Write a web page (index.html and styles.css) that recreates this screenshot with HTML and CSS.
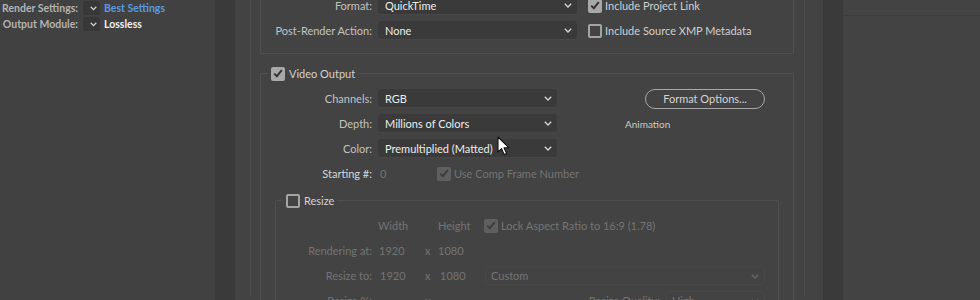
FILE: index.html
```html
<!DOCTYPE html>
<html lang="en">
<head>
    <meta charset="UTF-8">
    <meta name="viewport" content="width=device-width, initial-scale=1.0">
    <title>Output Module Settings</title>
    <link rel="stylesheet" href="styles.css">
</head>
<body>
    <div class="app">
        <aside class="queue">
            <div class="queue-row">
                <span class="queue-label">Render Settings:</span>
                <span class="mini-select"><svg width="7" height="5" viewBox="0 0 7 5"><path d="M0.7 0.8 L3.5 3.6 L6.3 0.8" fill="none" stroke="#cfcfcf" stroke-width="1.3"/></svg></span>
                <span class="queue-value link">Best Settings</span>
            </div>
            <div class="queue-row">
                <span class="queue-label">Output Module:</span>
                <span class="mini-select"><svg width="7" height="5" viewBox="0 0 7 5"><path d="M0.7 0.8 L3.5 3.6 L6.3 0.8" fill="none" stroke="#cfcfcf" stroke-width="1.3"/></svg></span>
                <span class="queue-value">Lossless</span>
            </div>
        </aside>

        <div class="gutter"></div>

        <main class="dialog">
            <div class="panel">
                <div class="group group-output">
                    <div class="row">
                        <span class="label">Format:</span>
                        <div class="select select-wide">QuickTime<svg class="chev" width="8" height="5" viewBox="0 0 8 5"><path d="M0.8 0.8 L4 4 L7.2 0.8" fill="none" stroke="#d6d6d6" stroke-width="1.3"/></svg></div>
                        <span class="check"><span class="box checked"><svg width="10" height="9" viewBox="0 0 10 9"><path d="M1.2 4.6 L3.8 7.2 L8.8 1.2" fill="none" stroke="#333" stroke-width="2"/></svg></span>Include Project Link</span>
                    </div>
                    <div class="row">
                        <span class="label">Post-Render Action:</span>
                        <div class="select select-wide">None<svg class="chev" width="8" height="5" viewBox="0 0 8 5"><path d="M0.8 0.8 L4 4 L7.2 0.8" fill="none" stroke="#d6d6d6" stroke-width="1.3"/></svg></div>
                        <span class="check"><span class="box"></span>Include Source XMP Metadata</span>
                    </div>
                </div>

                <fieldset class="group group-video">
                    <legend class="legend"><span class="box checked"><svg width="10" height="9" viewBox="0 0 10 9"><path d="M1.2 4.6 L3.8 7.2 L8.8 1.2" fill="none" stroke="#333" stroke-width="2"/></svg></span>Video Output</legend>

                    <div class="rows">
                        <div class="row">
                            <span class="label">Channels:</span>
                            <div class="select">RGB<svg class="chev" width="8" height="5" viewBox="0 0 8 5"><path d="M0.8 0.8 L4 4 L7.2 0.8" fill="none" stroke="#d6d6d6" stroke-width="1.3"/></svg></div>
                            <button class="pill">Format Options...</button>
                        </div>
                        <div class="row">
                            <span class="label">Depth:</span>
                            <div class="select">Millions of Colors<svg class="chev" width="8" height="5" viewBox="0 0 8 5"><path d="M0.8 0.8 L4 4 L7.2 0.8" fill="none" stroke="#d6d6d6" stroke-width="1.3"/></svg></div>
                            <span class="codec">Animation</span>
                        </div>
                        <div class="row">
                            <span class="label">Color:</span>
                            <div class="select">Premultiplied (Matted)<svg class="chev" width="8" height="5" viewBox="0 0 8 5"><path d="M0.8 0.8 L4 4 L7.2 0.8" fill="none" stroke="#d6d6d6" stroke-width="1.3"/></svg></div>
                        </div>
                        <div class="row">
                            <span class="label bright">Starting #:</span>
                            <span class="start-num off">0</span>
                            <span class="check off"><span class="box checked dim"><svg width="10" height="9" viewBox="0 0 10 9"><path d="M1.2 4.6 L3.8 7.2 L8.8 1.2" fill="none" stroke="#3d3d3d" stroke-width="2"/></svg></span>Use Comp Frame Number</span>
                        </div>
                    </div>

                    <fieldset class="group group-resize">
                        <legend class="legend"><span class="box"></span>Resize</legend>
                        <div class="rows off">
                            <div class="row">
                                <span class="label label-sm"></span>
                                <span class="col-w">Width</span>
                                <span class="col-h">Height</span>
                                <span class="check"><span class="box checked dim"><svg width="10" height="9" viewBox="0 0 10 9"><path d="M1.2 4.6 L3.8 7.2 L8.8 1.2" fill="none" stroke="#3d3d3d" stroke-width="2"/></svg></span>Lock Aspect Ratio to 16:9 (1.78)</span>
                            </div>
                            <div class="row">
                                <span class="label label-sm">Rendering at:</span>
                                <span class="num num-a">1920</span>
                                <span class="times">x</span>
                                <span class="num">1080</span>
                            </div>
                            <div class="row">
                                <span class="label label-sm">Resize to:</span>
                                <span class="num num-b">1920</span>
                                <span class="times times-b">x</span>
                                <span class="num num-c">1080</span>
                                <div class="select select-off select-preset">Custom<svg class="chev" width="8" height="5" viewBox="0 0 8 5"><path d="M0.8 0.8 L4 4 L7.2 0.8" fill="none" stroke="#6a6a6a" stroke-width="1.3"/></svg></div>
                            </div>
                            <div class="row">
                                <span class="label label-sm">Resize %:</span>
                                <span class="num num-b"></span>
                                <span class="times times-b">x</span>
                                <span class="num num-c"></span>
                                <span class="quality-label">Resize Quality:</span>
                                <div class="select select-off select-quality">High<svg class="chev" width="8" height="5" viewBox="0 0 8 5"><path d="M0.8 0.8 L4 4 L7.2 0.8" fill="none" stroke="#6a6a6a" stroke-width="1.3"/></svg></div>
                            </div>
                        </div>
                    </fieldset>
                </fieldset>
            </div>

            <svg class="cursor" width="13" height="20" viewBox="0 0 13 20">
                <path d="M1 1 L1 16 L4.6 12.6 L7.2 18.6 L9.6 17.6 L7 11.7 L11.8 11.7 Z" fill="#fff" stroke="#111" stroke-width="1.1" stroke-linejoin="round"/>
            </svg>
        </main>

        <div class="gutter"></div>
        <div class="side">
            <div class="side-head"></div>
        </div>
    </div>
</body>
</html>
```

FILE: styles.css
```css
* {
    box-sizing: border-box;
}

body {
    margin: 0;
    background: #414141;
    font-family: Lato, "Open Sans", sans-serif;
    font-size: 11px;
    color: #c6c6c6;
    overflow: hidden;
}

.app {
    display: flex;
    height: 300px;
}

/* render queue on the left */
.queue {
    width: 215px;
    flex: none;
    background: #414141;
}

.queue-row {
    display: flex;
    align-items: center;
    height: 16px;
    font-size: 10.5px;
    font-weight: bold;
    white-space: nowrap;
}

.queue-label {
    width: 80px;
    flex: none;
    padding-right: 2px;
    text-align: right;
    color: #b3b3b3;
}

.mini-select {
    width: 17px;
    height: 14px;
    flex: none;
    margin-left: 3px;
    border-radius: 2px;
    background: #373737;
    display: flex;
    align-items: center;
    justify-content: flex-end;
    padding-right: 3px;
}

.queue-value {
    margin-left: 4px;
    color: #f0f0f0;
}

.queue-value.link {
    color: #5b9be0;
}

.gutter {
    width: 20px;
    flex: none;
    background: #3a3a3a;
}

/* settings dialog */
.dialog {
    position: relative;
    width: 588px;
    flex: none;
    background: #434343;
}

.panel {
    width: 555px;
    height: 100%;
    margin-left: 15px;
    padding: 0 10px 0 9px;
    border-left: 1px solid #4b4b4b;
    border-right: 1px solid #4b4b4b;
}

.group {
    border: 1px solid #4f4f4f;
    border-radius: 2px;
    margin: 0;
    padding: 0;
    min-width: 0;
}

.group-output {
    width: 534px;
    margin-top: -4px;
    border-top: none;
    padding-bottom: 13px;
    display: flex;
    flex-direction: column;
    gap: 6px;
}

.group-video {
    width: 534px;
    margin-top: 12px;
    border-bottom: none;
    padding-bottom: 0;
}

.group-resize {
    width: 504px;
    margin: 10px 0 0 14px;
    border-bottom: none;
}

.legend {
    display: flex;
    align-items: center;
    gap: 4px;
    height: 15px;
    margin-left: 7px;
    padding: 0 3px;
    color: #d2d2d2;
}

.rows {
    display: flex;
    flex-direction: column;
    gap: 6px;
    padding-top: 8px;
}

.row {
    display: flex;
    align-items: center;
    height: 19px;
    white-space: nowrap;
}

.label {
    width: 111px;
    flex: none;
    text-align: right;
    color: #c2c2c2;
}

.label.bright {
    color: #d8d8d8;
}

.label-sm {
    width: 96px;
}

.select {
    position: relative;
    width: 179px;
    height: 19px;
    flex: none;
    margin-left: 6px;
    padding-left: 7px;
    border-radius: 4px;
    background: #3a3a3a;
    border-bottom: 1px solid #474747;
    color: #ededed;
    display: flex;
    align-items: center;
}

.select-wide {
    width: 199px;
}

.chev {
    position: absolute;
    right: 5px;
    top: 7px;
}

.check {
    display: flex;
    align-items: center;
    gap: 3px;
    margin-left: 11px;
    color: #cfcfcf;
}

.box {
    width: 14px;
    height: 14px;
    flex: none;
    border: 2px solid #a4a4a4;
    border-radius: 2px;
    display: flex;
    align-items: center;
    justify-content: center;
}

.box.checked {
    background: #a8a8a8;
    border-color: #a8a8a8;
}

.box.dim {
    background: #5f5f5f;
    border-color: #5f5f5f;
}

.pill {
    width: 120px;
    height: 20px;
    flex: none;
    margin-left: 88px;
    border: 1.5px solid #a8a8a8;
    border-radius: 10px;
    background: transparent;
    color: #d4d4d4;
    font: inherit;
    padding: 0;
}

.codec {
    margin-left: 68px;
    font-size: 10px;
    color: #cacaca;
}

.off,
.off .label,
.off .check {
    color: #747474;
}

.start-num {
    width: 57px;
    flex: none;
    margin-left: 8px;
}

.start-num + .check {
    margin-left: 0;
}

.col-w {
    width: 60px;
    flex: none;
    margin-left: 6px;
}

.col-h {
    width: 46px;
    flex: none;
}

.col-h + .check {
    margin-left: 0;
}

.num {
    width: 46px;
    flex: none;
}

.num-a {
    margin-left: 7px;
}

.num-b {
    width: 45px;
    margin-left: 8px;
}

.num-c {
    width: 45px;
}

.times {
    width: 13px;
    flex: none;
}

.times-b {
    width: 15px;
}

.select-off {
    background: transparent;
    border: 1px solid #484848;
    color: #747474;
    margin-left: 0;
    padding-left: 5px;
}

.select-preset {
    width: 280px;
}

.quality-label {
    width: 175px;
    flex: none;
    text-align: right;
}

.select-quality {
    width: 99px;
    margin-left: 6px;
}

.cursor {
    position: absolute;
    left: 262px;
    top: 136px;
}

.side {
    flex: 1;
    background: #434343;
}

.side-head {
    height: 16px;
    border-bottom: 1px solid #3d3d3d;
}
```
